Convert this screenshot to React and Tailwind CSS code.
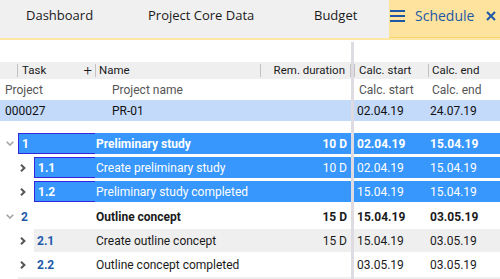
import React from "react";

const BLUE = "bg-[#3797fd]";

function ChevDown() {
  return (
    <svg width="8" height="5" viewBox="0 0 8 5" className="block">
      <path d="M0.7 0.7 L4 4 L7.3 0.7" fill="none" stroke="#a3a3a3" strokeWidth="1.6" />
    </svg>
  );
}
function ChevRight() {
  return (
    <svg width="6" height="8" viewBox="0 0 6 8" className="block">
      <path d="M1 0.8 L4.4 4 L1 7.2" fill="none" stroke="#555" strokeWidth="2" />
    </svg>
  );
}

const rows = [
  { lvl: 1, num: "1", name: "Preliminary study", dur: "10 D", s: "02.04.19", e: "15.04.19", sel: true, bold: true },
  { lvl: 2, num: "1.1", name: "Create preliminary study", dur: "10 D", s: "02.04.19", e: "15.04.19", sel: true },
  { lvl: 2, num: "1.2", name: "Preliminary study completed", dur: "", s: "15.04.19", e: "15.04.19", sel: true },
  { lvl: 1, num: "2", name: "Outline concept", dur: "15 D", s: "15.04.19", e: "03.05.19", bold: true },
  { lvl: 2, num: "2.1", name: "Create outline concept", dur: "15 D", s: "15.04.19", e: "03.05.19", gray: true },
  { lvl: 2, num: "2.2", name: "Outline concept completed", dur: "", s: "03.05.19", e: "03.05.19" },
  { lvl: 1, num: "", name: "", dur: "", s: "", e: "", gray: true },
];

function LeftRow({ r }) {
  const fill = r.sel ? BLUE : r.gray ? "bg-[#efefef]" : "bg-white";
  const h = r.sel ? "h-[21px]" : "h-[23px]";
  const txt = r.sel ? "text-white" : "text-[#1a1a1a]";
  const numTxt = r.sel ? "text-white" : "text-[#1d5aa9]";
  const indent = r.lvl === 1 ? "w-[18px]" : "w-[34px]";
  return (
    <div className="h-[24px] pt-[1px] flex">
      <div className={`${indent} shrink-0 flex items-center ${r.lvl === 1 ? "justify-center pl-[1px]" : "justify-end pr-[8px]"} ${h}`}>
        {r.num && (r.lvl === 1 ? <ChevDown /> : <ChevRight />)}
      </div>
      <div className={`flex-1 flex ${h} ${fill} ${r.bold ? "font-bold" : ""}`}>
        <div
          className={`${r.lvl === 1 ? "w-[77px]" : "w-[61px]"} shrink-0 flex items-center pl-[3px] font-bold ${numTxt} ${
            r.sel ? "border-l border-t border-b border-[#3326dc]" : ""
          }`}
        >
          {r.num}
        </div>
        <div className={`w-[165px] shrink-0 flex items-center pl-[1px] ${txt}`}>{r.name}</div>
        <div className={`flex-1 flex items-center justify-end pr-[4px] ${txt}`}>{r.dur}</div>
      </div>
    </div>
  );
}

function RightRow({ r }) {
  const fill = r.sel ? BLUE : r.gray ? "bg-[#efefef]" : "bg-white";
  const h = r.sel ? "h-[21px]" : "h-[23px]";
  const txt = r.sel ? "text-white" : "text-[#1a1a1a]";
  return (
    <div className="h-[24px] pt-[1px]">
      <div className={`flex ${h} ${fill} ${txt} ${r.bold ? "font-bold" : ""}`}>
        <div className="w-[74px] shrink-0 flex items-center pl-[3px]">{r.s}</div>
        <div className="flex-1 flex items-center pl-[2px]">{r.e}</div>
      </div>
    </div>
  );
}

function Sep() {
  return <div className="w-px h-[13px] bg-[#c2c2c2] shrink-0" />;
}

export default function App() {
  return (
    <div className="w-[500px] h-[279px] overflow-hidden bg-white" style={{ fontFamily: "Roboto, sans-serif" }}>
      {/* Tab bar */}
      <div className="h-[38px] flex bg-[#f0f0f0] text-[13px] text-[#1a1a1a]" style={{ fontFamily: "'Open Sans', sans-serif" }}>
        <div className="w-[148px] pl-[26px] pb-[7px] flex items-center">Dashboard</div>
        <div className="w-[166px] pb-[7px] flex items-center">Project Core Data</div>
        <div className="w-[75px] pb-[7px] flex items-center">Budget</div>
        <div className="flex-1 flex items-center pb-[6px] bg-[#fde39e] border-b border-[#fbd670] text-[#1d57a6]">
          <div className="w-[15px] ml-[1px] flex flex-col gap-[3px]">
            <div className="h-[2px] bg-[#1d57a6]" />
            <div className="h-[2px] bg-[#1d57a6]" />
            <div className="h-[2px] bg-[#1d57a6]" />
          </div>
          <div className="ml-[10px] text-[14px]">Schedule</div>
          <svg width="10" height="10" viewBox="0 0 10 10" className="ml-[12px]">
            <path d="M1 1 L9 9 M9 1 L1 9" stroke="#1d57a6" strokeWidth="2" />
          </svg>
        </div>
      </div>
      <div className="h-[2px] bg-[#fde6a6]" />

      {/* Grid */}
      <div className="flex text-[12px]">
        {/* Left pane */}
        <div className="w-[351px] shrink-0 pt-[22px]">
          <div className="h-[17px] bg-[#efefef] flex items-center text-[11.5px] text-[#1a1a1a]">
            <div className="w-[18px] shrink-0 flex justify-end"><Sep /></div>
            <div className="w-[77px] shrink-0 flex items-center pl-[4px] pr-[3px] justify-between">
              <span>Task</span>
              <span className="text-[15px] leading-none font-light">+</span>
            </div>
            <Sep />
            <div className="w-[164px] shrink-0 pl-[3px]">Name</div>
            <Sep />
            <div className="flex-1 flex justify-end pr-[5px]">Rem. duration</div>
            <Sep />
          </div>
          <div className="h-[21px] flex items-center text-[#555]">
            <div className="w-[112px] pl-[5px] shrink-0">Project</div>
            <div>Project name</div>
          </div>
          <div className="h-[21px] flex items-center bg-[#c4dafb] text-[#111]">
            <div className="w-[112px] pl-[5px] shrink-0">000027</div>
            <div>PR-01</div>
          </div>
          <div className="h-[11px]" />
          {rows.map((r, i) => (
            <LeftRow key={i} r={r} />
          ))}
        </div>

        {/* Divider */}
        <div className="w-[3px] shrink-0 mt-[2px] h-[300px] bg-[#dfdbe3]" />

        {/* Right pane */}
        <div className="flex-1 pt-[22px]">
          <div className="h-[17px] bg-[#efefef] flex items-center text-[11.5px] text-[#1a1a1a]">
            <Sep />
            <div className="w-[73px] shrink-0 pl-[4px]">Calc. start</div>
            <Sep />
            <div className="flex-1 pl-[3px]">Calc. end</div>
          </div>
          <div className="h-[21px] flex items-center text-[#555]">
            <div className="w-[74px] shrink-0 pl-[5px]">Calc. start</div>
            <div className="pl-[4px]">Calc. end</div>
          </div>
          <div className="h-[21px] flex items-center bg-[#c4dafb] text-[#111]">
            <div className="w-[74px] shrink-0 pl-[3px]">02.04.19</div>
            <div className="pl-[2px]">24.07.19</div>
          </div>
          <div className="h-[11px]" />
          {rows.map((r, i) => (
            <RightRow key={i} r={r} />
          ))}
        </div>
      </div>
    </div>
  );
}
